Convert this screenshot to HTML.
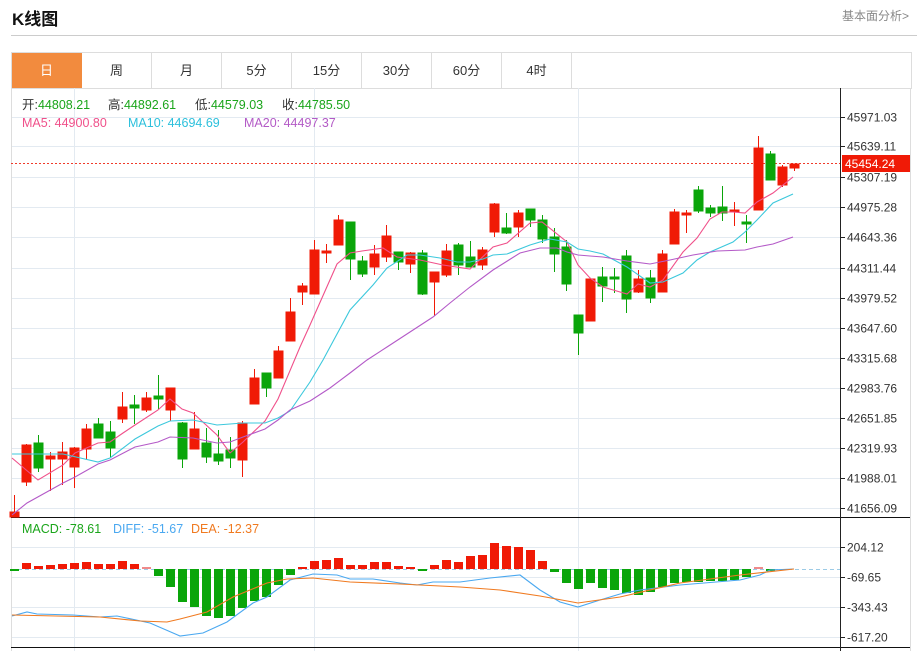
<!DOCTYPE html>
<html><head><meta charset="utf-8"><style>
body{margin:0;width:917px;height:651px;background:#fff;overflow:hidden;font-family:"Liberation Sans","Noto Sans CJK SC",sans-serif;position:relative}
.t{position:absolute;left:12px;top:5px;font-size:17px;font-weight:bold;color:#111}
.r{position:absolute;right:8px;top:7px;font-size:12px;color:#888}
.sep{position:absolute;left:11px;right:0;top:35px;height:1px;background:#ccc}
.tabs{position:absolute;left:11px;top:52px;width:899px;height:35px;border:1px solid #ddd;border-bottom:1px solid #ddd}
.tab{float:left;width:69px;height:35px;border-right:1px solid #ddd;text-align:center;line-height:35px;font-size:13px;color:#333}
.tab.a{background:#f28b3e;color:#fff;border-right-color:#f28b3e}
svg{position:absolute;left:0;top:0}
</style></head><body>
<div class="t">K线图</div>
<div class="r">基本面分析&gt;</div>
<div class="sep"></div>
<div class="tabs"><div class="tab a">日</div><div class="tab">周</div><div class="tab">月</div><div class="tab">5分</div><div class="tab">15分</div><div class="tab">30分</div><div class="tab">60分</div><div class="tab">4时</div></div>
<svg width="917" height="651" viewBox="0 0 917 651" font-family="Liberation Sans, Noto Sans CJK SC, sans-serif">
<g stroke="#e3eaf1" stroke-width="1">
<line x1="11" y1="117.5" x2="840" y2="117.5"/><line x1="11" y1="146.5" x2="840" y2="146.5"/><line x1="11" y1="177.5" x2="840" y2="177.5"/><line x1="11" y1="207.5" x2="840" y2="207.5"/><line x1="11" y1="237.5" x2="840" y2="237.5"/><line x1="11" y1="268.5" x2="840" y2="268.5"/><line x1="11" y1="298.5" x2="840" y2="298.5"/><line x1="11" y1="328.5" x2="840" y2="328.5"/><line x1="11" y1="358.5" x2="840" y2="358.5"/><line x1="11" y1="388.5" x2="840" y2="388.5"/><line x1="11" y1="418.5" x2="840" y2="418.5"/><line x1="11" y1="448.5" x2="840" y2="448.5"/><line x1="11" y1="478.5" x2="840" y2="478.5"/><line x1="11" y1="508.5" x2="840" y2="508.5"/>
<line x1="11" y1="547.5" x2="840" y2="547.5"/><line x1="11" y1="577.5" x2="840" y2="577.5"/><line x1="11" y1="607.5" x2="840" y2="607.5"/><line x1="11" y1="637.5" x2="840" y2="637.5"/>
<line x1="74.5" y1="88" x2="74.5" y2="651"/><line x1="314.5" y1="88" x2="314.5" y2="651"/><line x1="578.5" y1="88" x2="578.5" y2="651"/>
</g>
<line x1="11.5" y1="88" x2="11.5" y2="651" stroke="#ddd"/>
<line x1="910.5" y1="88" x2="910.5" y2="651" stroke="#ddd"/>
<line x1="11" y1="517.5" x2="910" y2="517.5" stroke="#111"/>
<line x1="11" y1="647.5" x2="910" y2="647.5" stroke="#111"/>
<line x1="840.5" y1="88" x2="840.5" y2="651" stroke="#222"/>
<g stroke="#222"><line x1="840" y1="117.5" x2="845" y2="117.5"/><line x1="840" y1="146.5" x2="845" y2="146.5"/><line x1="840" y1="177.5" x2="845" y2="177.5"/><line x1="840" y1="207.5" x2="845" y2="207.5"/><line x1="840" y1="237.5" x2="845" y2="237.5"/><line x1="840" y1="268.5" x2="845" y2="268.5"/><line x1="840" y1="298.5" x2="845" y2="298.5"/><line x1="840" y1="328.5" x2="845" y2="328.5"/><line x1="840" y1="358.5" x2="845" y2="358.5"/><line x1="840" y1="388.5" x2="845" y2="388.5"/><line x1="840" y1="418.5" x2="845" y2="418.5"/><line x1="840" y1="448.5" x2="845" y2="448.5"/><line x1="840" y1="478.5" x2="845" y2="478.5"/><line x1="840" y1="508.5" x2="845" y2="508.5"/><line x1="840" y1="547.5" x2="845" y2="547.5"/><line x1="840" y1="577.5" x2="845" y2="577.5"/><line x1="840" y1="607.5" x2="845" y2="607.5"/><line x1="840" y1="637.5" x2="845" y2="637.5"/></g>
<g font-size="12" fill="#333">
<text x="847" y="121.5">45971.03</text><text x="847" y="150.5">45639.11</text><text x="847" y="181.5">45307.19</text><text x="847" y="211.5">44975.28</text><text x="847" y="241.5">44643.36</text><text x="847" y="272.5">44311.44</text><text x="847" y="302.5">43979.52</text><text x="847" y="332.5">43647.60</text><text x="847" y="362.5">43315.68</text><text x="847" y="392.5">42983.76</text><text x="847" y="422.5">42651.85</text><text x="847" y="452.5">42319.93</text><text x="847" y="482.5">41988.01</text><text x="847" y="512.5">41656.09</text>
<text x="847" y="551.5">204.12</text><text x="847" y="581.5">-69.65</text><text x="847" y="611.5">-343.43</text><text x="847" y="641.5">-617.20</text>
</g>
<line x1="11" y1="163.5" x2="840" y2="163.5" stroke="#f03a2a" stroke-dasharray="2,2"/>
<rect x="842" y="155" width="68" height="17" fill="#f01a06"/>
<text x="845" y="168" font-size="12" fill="#fff">45454.24</text>
<line x1="11" y1="569.5" x2="840" y2="569.5" stroke="#9ccbe6" stroke-dasharray="4,3"/>
<g font-size="12.5">
<text x="22" y="109" fill="#333">开:<tspan fill="#1aa51a">44808.21</tspan></text>
<text x="108" y="109" fill="#333">高:<tspan fill="#1aa51a">44892.61</tspan></text>
<text x="195" y="109" fill="#333">低:<tspan fill="#1aa51a">44579.03</tspan></text>
<text x="282" y="109" fill="#333">收:<tspan fill="#1aa51a">44785.50</tspan></text>
<text x="22" y="127" fill="#f0508a">MA5: 44900.80</text><text x="128" y="127" fill="#2cc0dc">MA10: 44694.69</text><text x="244" y="127" fill="#b35ac6">MA20: 44497.37</text>
<text x="22" y="533" fill="#1aa51a">MACD: -78.61</text><text x="113" y="533" fill="#4aa8f0">DIFF: -51.67</text><text x="191" y="533" fill="#f07a20">DEA: -12.37</text>
</g>
<g stroke-width="1">
<g stroke="#f01a06" fill="#f01a06">
<line x1="14.5" y1="495" x2="14.5" y2="517"/><rect x="10" y="512" width="9" height="5"/>
<line x1="26.5" y1="444" x2="26.5" y2="486"/><rect x="22" y="445" width="9" height="37"/>
<line x1="50.5" y1="452" x2="50.5" y2="491"/><rect x="46" y="456" width="9" height="3"/>
<line x1="62.5" y1="442" x2="62.5" y2="485"/><rect x="58" y="452" width="9" height="7"/>
<line x1="74.5" y1="447" x2="74.5" y2="488"/><rect x="70" y="448" width="9" height="19"/>
<line x1="86.5" y1="424" x2="86.5" y2="459"/><rect x="82" y="429" width="9" height="20"/>
<line x1="122.5" y1="392" x2="122.5" y2="423"/><rect x="118" y="407" width="9" height="12"/>
<line x1="146.5" y1="392" x2="146.5" y2="412"/><rect x="142" y="398" width="9" height="12"/>
<line x1="170.5" y1="388" x2="170.5" y2="421"/><rect x="166" y="388" width="9" height="22"/>
<line x1="194.5" y1="412" x2="194.5" y2="449"/><rect x="190" y="429" width="9" height="20"/>
<line x1="242.5" y1="421" x2="242.5" y2="477"/><rect x="238" y="423" width="9" height="37"/>
<line x1="254.5" y1="369" x2="254.5" y2="404"/><rect x="250" y="378" width="9" height="26"/>
<line x1="278.5" y1="346" x2="278.5" y2="378"/><rect x="274" y="351" width="9" height="27"/>
<line x1="290.5" y1="298" x2="290.5" y2="341"/><rect x="286" y="312" width="9" height="29"/>
<line x1="302.5" y1="283" x2="302.5" y2="305"/><rect x="298" y="286" width="9" height="6"/>
<line x1="314.5" y1="240" x2="314.5" y2="294"/><rect x="310" y="250" width="9" height="44"/>
<line x1="326.5" y1="244" x2="326.5" y2="263"/><rect x="322" y="251" width="9" height="2"/>
<line x1="338.5" y1="215" x2="338.5" y2="245"/><rect x="334" y="220" width="9" height="25"/>
<line x1="374.5" y1="245" x2="374.5" y2="275"/><rect x="370" y="254" width="9" height="13"/>
<line x1="386.5" y1="225" x2="386.5" y2="262"/><rect x="382" y="236" width="9" height="21"/>
<line x1="410.5" y1="252" x2="410.5" y2="273"/><rect x="406" y="253" width="9" height="11"/>
<line x1="434.5" y1="272" x2="434.5" y2="316"/><rect x="430" y="272" width="9" height="10"/>
<line x1="446.5" y1="244" x2="446.5" y2="277"/><rect x="442" y="251" width="9" height="24"/>
<line x1="482.5" y1="247" x2="482.5" y2="270"/><rect x="478" y="250" width="9" height="15"/>
<line x1="494.5" y1="203" x2="494.5" y2="237"/><rect x="490" y="204" width="9" height="28"/>
<line x1="518.5" y1="210" x2="518.5" y2="237"/><rect x="514" y="213" width="9" height="14"/>
<line x1="590.5" y1="278" x2="590.5" y2="321"/><rect x="586" y="279" width="9" height="42"/>
<line x1="638.5" y1="270" x2="638.5" y2="293"/><rect x="634" y="279" width="9" height="13"/>
<line x1="662.5" y1="250" x2="662.5" y2="292"/><rect x="658" y="254" width="9" height="38"/>
<line x1="674.5" y1="209" x2="674.5" y2="244"/><rect x="670" y="212" width="9" height="32"/>
<line x1="686.5" y1="210" x2="686.5" y2="233"/><rect x="682" y="213" width="9" height="2"/>
<line x1="734.5" y1="202" x2="734.5" y2="226"/><rect x="730" y="210" width="9" height="2"/>
<line x1="758.5" y1="136" x2="758.5" y2="210"/><rect x="754" y="148" width="9" height="62"/>
<line x1="782.5" y1="165" x2="782.5" y2="187"/><rect x="778" y="167" width="9" height="18"/>
<line x1="794.5" y1="164" x2="794.5" y2="171"/><rect x="790" y="164" width="9" height="4"/>
</g>
<g stroke="#0aa50a" fill="#0aa50a">
<line x1="38.5" y1="435" x2="38.5" y2="472"/><rect x="34" y="443" width="9" height="25"/>
<line x1="98.5" y1="418" x2="98.5" y2="438"/><rect x="94" y="424" width="9" height="14"/>
<line x1="110.5" y1="421" x2="110.5" y2="458"/><rect x="106" y="432" width="9" height="16"/>
<line x1="134.5" y1="395" x2="134.5" y2="424"/><rect x="130" y="405" width="9" height="3"/>
<line x1="158.5" y1="375" x2="158.5" y2="409"/><rect x="154" y="396" width="9" height="3"/>
<line x1="182.5" y1="422" x2="182.5" y2="468"/><rect x="178" y="423" width="9" height="36"/>
<line x1="206.5" y1="428" x2="206.5" y2="463"/><rect x="202" y="443" width="9" height="14"/>
<line x1="218.5" y1="430" x2="218.5" y2="465"/><rect x="214" y="454" width="9" height="7"/>
<line x1="230.5" y1="437" x2="230.5" y2="468"/><rect x="226" y="450" width="9" height="8"/>
<line x1="266.5" y1="373" x2="266.5" y2="397"/><rect x="262" y="373" width="9" height="15"/>
<line x1="350.5" y1="222" x2="350.5" y2="280"/><rect x="346" y="222" width="9" height="37"/>
<line x1="362.5" y1="256" x2="362.5" y2="277"/><rect x="358" y="261" width="9" height="13"/>
<line x1="398.5" y1="252" x2="398.5" y2="270"/><rect x="394" y="252" width="9" height="10"/>
<line x1="422.5" y1="250" x2="422.5" y2="295"/><rect x="418" y="253" width="9" height="41"/>
<line x1="458.5" y1="243" x2="458.5" y2="275"/><rect x="454" y="245" width="9" height="20"/>
<line x1="470.5" y1="241" x2="470.5" y2="267"/><rect x="466" y="257" width="9" height="10"/>
<line x1="506.5" y1="213" x2="506.5" y2="234"/><rect x="502" y="228" width="9" height="5"/>
<line x1="530.5" y1="209" x2="530.5" y2="227"/><rect x="526" y="209" width="9" height="11"/>
<line x1="542.5" y1="215" x2="542.5" y2="243"/><rect x="538" y="220" width="9" height="19"/>
<line x1="554.5" y1="228" x2="554.5" y2="272"/><rect x="550" y="237" width="9" height="17"/>
<line x1="566.5" y1="240" x2="566.5" y2="291"/><rect x="562" y="247" width="9" height="37"/>
<line x1="578.5" y1="315" x2="578.5" y2="355"/><rect x="574" y="315" width="9" height="18"/>
<line x1="602.5" y1="267" x2="602.5" y2="302"/><rect x="598" y="277" width="9" height="9"/>
<line x1="614.5" y1="268" x2="614.5" y2="293"/><rect x="610" y="277" width="9" height="2"/>
<line x1="626.5" y1="250" x2="626.5" y2="313"/><rect x="622" y="256" width="9" height="43"/>
<line x1="650.5" y1="270" x2="650.5" y2="303"/><rect x="646" y="278" width="9" height="20"/>
<line x1="698.5" y1="186" x2="698.5" y2="213"/><rect x="694" y="190" width="9" height="21"/>
<line x1="710.5" y1="205" x2="710.5" y2="217"/><rect x="706" y="208" width="9" height="5"/>
<line x1="722.5" y1="186" x2="722.5" y2="221"/><rect x="718" y="207" width="9" height="6"/>
<line x1="746.5" y1="215" x2="746.5" y2="243"/><rect x="742" y="222" width="9" height="2"/>
<line x1="770.5" y1="151" x2="770.5" y2="180"/><rect x="766" y="154" width="9" height="26"/>
</g>
</g>
<g fill="none" stroke-width="1.1">
<polyline stroke="#f0508a" points="12,458 38,480 63,465 75,453 98,443 110,442 123,433 135,425 158,410 170,399 182,409 193,413 217,435 230,453 243,442 265,421 278,399 300,347 310,325 337,264 350,253 362,251 383,248 397,257 420,260 443,265 470,269 493,247 507,243 530,223 542,222 567,242 578,265 590,278 603,287 627,294 638,284 650,287 663,280 683,252 697,238 710,219 722,212 733,212 745,213 757,202 773,193 793,177"/>
<polyline stroke="#3cc8dc" points="12,454 63,454 98,462 110,458 135,439 158,426 170,421 193,420 217,425 243,423 265,423 278,418 290,411 310,382 323,360 350,310 373,285 387,268 407,255 420,255 440,258 457,262 470,262 483,259 493,255 507,254 530,245 550,239 567,242 578,249 590,251 603,254 627,267 650,283 663,282 683,273 697,260 710,252 733,242 745,232 757,220 773,203 793,194"/>
<polyline stroke="#b45ac8" points="12,515 27,503 63,483 75,477 98,464 110,460 135,447 158,442 170,437 193,438 217,443 230,442 243,437 265,429 278,420 290,410 310,401 330,388 350,373 367,360 387,347 410,332 433,317 450,303 470,287 493,270 520,253 540,248 557,248 567,252 578,255 590,256 603,257 627,261 650,264 670,260 693,255 717,251 745,250 757,247 773,244 793,237"/>
</g>
<g fill="#f01a06">
<rect x="22" y="563" width="9" height="6"/><rect x="34" y="566" width="9" height="3"/><rect x="46" y="565" width="9" height="4"/><rect x="58" y="564" width="9" height="5"/><rect x="70" y="563" width="9" height="6"/><rect x="82" y="562" width="9" height="7"/><rect x="94" y="564" width="9" height="5"/><rect x="106" y="564" width="9" height="5"/><rect x="118" y="561" width="9" height="8"/><rect x="130" y="564" width="9" height="5"/><rect x="142" y="567" width="9" height="2" fill="#f08a8a"/>
<rect x="298" y="567" width="9" height="2"/><rect x="310" y="561" width="9" height="8"/><rect x="322" y="560" width="9" height="9"/><rect x="334" y="558" width="9" height="11"/><rect x="346" y="565" width="9" height="4"/><rect x="358" y="565" width="9" height="4"/><rect x="370" y="562" width="9" height="7"/><rect x="382" y="562" width="9" height="7"/><rect x="394" y="566" width="9" height="3"/><rect x="406" y="567" width="9" height="2"/>
<rect x="430" y="565" width="9" height="4"/><rect x="442" y="560" width="9" height="9"/><rect x="454" y="562" width="9" height="7"/><rect x="466" y="556" width="9" height="13"/><rect x="478" y="555" width="9" height="14"/><rect x="490" y="543" width="9" height="26"/><rect x="502" y="546" width="9" height="23"/><rect x="514" y="547" width="9" height="22"/><rect x="526" y="550" width="9" height="19"/><rect x="538" y="561" width="9" height="8"/>
<rect x="754" y="567" width="9" height="2" fill="#f08a8a"/>
</g>
<g fill="#0aa50a">
<rect x="10" y="569" width="9" height="2"/><rect x="154" y="569" width="9" height="7"/><rect x="166" y="569" width="9" height="18"/><rect x="178" y="569" width="9" height="33"/><rect x="190" y="569" width="9" height="38"/><rect x="202" y="569" width="9" height="47"/><rect x="214" y="569" width="9" height="49"/><rect x="226" y="569" width="9" height="47"/><rect x="238" y="569" width="9" height="39"/><rect x="250" y="569" width="9" height="32"/><rect x="262" y="569" width="9" height="28"/><rect x="274" y="569" width="9" height="16"/><rect x="286" y="569" width="9" height="6"/>
<rect x="418" y="569" width="9" height="2"/>
<rect x="550" y="569" width="9" height="3"/><rect x="562" y="569" width="9" height="14"/><rect x="574" y="569" width="9" height="20"/><rect x="586" y="569" width="9" height="14"/><rect x="598" y="569" width="9" height="19"/><rect x="610" y="569" width="9" height="21"/><rect x="622" y="569" width="9" height="24"/><rect x="634" y="569" width="9" height="26"/><rect x="646" y="569" width="9" height="23"/><rect x="658" y="569" width="9" height="18"/><rect x="670" y="569" width="9" height="14"/><rect x="682" y="569" width="9" height="13"/><rect x="694" y="569" width="9" height="13"/><rect x="706" y="569" width="9" height="12"/><rect x="718" y="569" width="9" height="12"/><rect x="730" y="569" width="9" height="11"/><rect x="742" y="569" width="9" height="8"/><rect x="766" y="569" width="9" height="2"/>
</g>
<g fill="none" stroke-width="1.1">
<polyline stroke="#4aa8f0" points="12,616 27,612 37,614 73,615 100,617 117,616 150,623 180,636 203,633 227,622 253,603 267,597 290,580 313,574 337,575 350,579 373,579 400,583 417,585 433,582 460,582 490,578 520,575 540,590 560,602 578,607 600,600 620,594 640,590 680,585 740,580 760,575 770,570 794,569"/>
<polyline stroke="#f07a20" points="12,615 100,617 140,621 167,622 180,619 207,612 233,597 267,583 287,579 313,578 350,582 400,584 460,587 500,590 540,596 578,603 620,597 680,583 740,575 794,569"/>
</g>
</svg>
</body></html>
